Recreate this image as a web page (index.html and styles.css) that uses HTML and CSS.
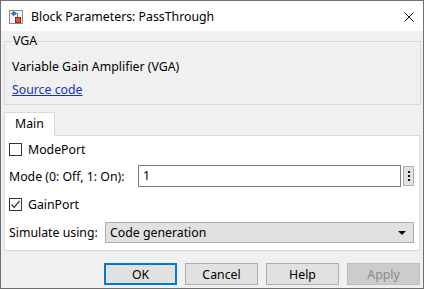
FILE: index.html
```html
<!DOCTYPE html>
<html>
<head>
  <title>Block Parameters: PassThrough</title>
  <meta name="viewport" content="width=device-width, initial-scale=1.0">
  <link rel="stylesheet" href="styles.css">
</head>
<body>
  <div class="window">
    <!-- Title bar -->
    <div class="titlebar">
      <span class="app-icon">
        <svg width="14" height="14" viewBox="0 0 14 14">
          <rect x="0.5" y="0.5" width="13" height="13" fill="#f4f4f4" stroke="#8c8c8c"/>
          <path d="M2 3.5 H4 M4 1.5 V5.5 L7.5 3.5 Z" fill="#2f8fd8" stroke="#1d5fa8" stroke-width="1"/>
          <path d="M6.5 3.5 H8.5 V7" fill="none" stroke="#2f8fd8" stroke-width="1"/>
          <rect x="6.5" y="7.5" width="5" height="5" fill="#e8552a" stroke="#8a2a10"/>
        </svg>
      </span>
      <span class="title">Block Parameters: PassThrough</span>
      <span class="close">
        <svg width="10" height="10" viewBox="0 0 10 10">
          <path d="M0.5 0.5 L9.5 9.5 M9.5 0.5 L0.5 9.5" stroke="#111" stroke-width="1"/>
        </svg>
      </span>
    </div>

    <div class="content">
      <fieldset class="group">
        <legend>VGA</legend>
        <div class="desc">Variable Gain Amplifier (VGA)</div>
        <a class="link" href="#">Source code</a>
      </fieldset>

      <div class="tabs">
        <div class="tab active">Main</div>
      </div>
      <div class="panel">
        <label class="row check-row first">
          <span class="checkbox"></span>
          <span>ModePort</span>
        </label>
        <div class="row field-row">
          <span class="label">Mode (0: Off, 1: On):</span>
          <div class="text-input">1</div>
          <div class="dots-btn"><i></i><i></i><i></i></div>
        </div>
        <label class="row check-row">
          <span class="checkbox checked">
            <svg width="11" height="11" viewBox="0 0 11 11">
              <path d="M1.5 5.5 L4.2 8.3 L9.5 1.8" fill="none" stroke="#222" stroke-width="1.1"/>
            </svg>
          </span>
          <span>GainPort</span>
        </label>
        <div class="row select-row">
          <span class="label">Simulate using:</span>
          <div class="select">
            <span>Code generation</span>
            <span class="arrow"></span>
          </div>
        </div>
      </div>

      <div class="buttons">
        <button class="btn default">OK</button>
        <button class="btn">Cancel</button>
        <button class="btn">Help</button>
        <button class="btn disabled">Apply</button>
      </div>
    </div>
  </div>
</body>
</html>
```

FILE: styles.css
```css
body {
  margin: 0;
  font-family: "Noto Sans", "Segoe UI", sans-serif;
  font-size: 12.3px;
  color: #000;
  background-color: #fff;
}

.window {
  box-sizing: border-box;
  width: 424px;
  height: 289px;
  border: 1px solid #6f6f6f;
  display: flex;
  flex-direction: column;
  background-color: #f0f0f0;
}

.titlebar {
  height: 30px;
  background-color: #fff;
  display: flex;
  align-items: center;
  padding-left: 8px;
  padding-right: 9px;
}

.app-icon {
  display: flex;
  width: 14px;
  height: 14px;
  margin-top: 1px;
}

.title {
  flex: 1;
  margin-left: 8px;
}

.close {
  display: flex;
  margin-top: 1px;
}

.content {
  flex: 1;
  display: flex;
  flex-direction: column;
  padding: 0 2px 0 3px;
}

.group {
  margin: 2px 0 0 0;
  padding: 3px 7px 6px 7px;
  border: 1px solid #dadada;
  min-width: 0;
}

.group legend {
  padding: 0 1px;
  line-height: 16px;
}

.desc {
  line-height: 16px;
  margin-top: 7px;
}

.link {
  display: inline-block;
  margin-top: 7px;
  color: #1433b8;
  text-decoration: underline;
  line-height: 16px;
}

.tabs {
  display: flex;
  margin-top: 6px;
}

.tab {
  box-sizing: border-box;
  width: 51px;
  height: 24px;
  padding-left: 10px;
  line-height: 22px;
  background-color: #fff;
  border: 1px solid #d9d9d9;
  border-bottom: none;
  position: relative;
  top: 1px;
}

.panel {
  box-sizing: border-box;
  height: 116px;
  margin-right: 1px;
  background-color: #fff;
  border: 1px solid #d9d9d9;
  padding: 0 5px 0 3px;
  display: flex;
  flex-direction: column;
}

.row {
  display: flex;
  align-items: center;
}

.check-row {
  height: 14px;
  margin-top: 10px;
}

.check-row.first {
  margin-top: 6px;
}

.checkbox {
  box-sizing: border-box;
  width: 13px;
  height: 13px;
  border: 1px solid #333;
  background-color: #fff;
  margin-left: 1px;
  margin-right: 6px;
  display: flex;
  align-items: center;
  justify-content: center;
}

.field-row {
  height: 22px;
  margin-top: 9px;
}

.field-row .label {
  width: 129px;
  margin-left: 1px;
}

.text-input {
  box-sizing: border-box;
  flex: 1;
  height: 22px;
  border: 1px solid #7a7a7a;
  padding-left: 4px;
  line-height: 20px;
  background-color: #fff;
}

.dots-btn {
  box-sizing: border-box;
  width: 11px;
  height: 20px;
  margin-left: 2px;
  background-color: #e1e1e1;
  border: 1px solid #adadad;
  display: flex;
  flex-direction: column;
  align-items: center;
  justify-content: center;
  gap: 2px;
}

.dots-btn i {
  display: block;
  width: 2px;
  height: 2px;
  background-color: #111;
}

.select-row {
  height: 21px;
  margin-top: 11px;
}

.select-row .label {
  width: 96px;
  margin-left: 1px;
}

.select {
  box-sizing: border-box;
  flex: 1;
  height: 21px;
  background-color: #e1e1e1;
  border: 1px solid #adadad;
  padding: 0 7px 0 4px;
  display: flex;
  align-items: center;
  justify-content: space-between;
}

.arrow {
  width: 0;
  height: 0;
  border-left: 4px solid transparent;
  border-right: 4px solid transparent;
  border-top: 4px solid #111;
}

.buttons {
  display: flex;
  justify-content: flex-end;
  gap: 8px;
  margin-top: 12px;
  margin-right: 1px;
}

.btn {
  box-sizing: border-box;
  width: 73px;
  height: 22px;
  font-family: "Noto Sans", "Segoe UI", sans-serif;
  font-size: 12.3px;
  color: #000;
  background-color: #e1e1e1;
  border: 1px solid #adadad;
  padding: 0;
}

.btn.default {
  border: 2px solid #0078d7;
}

.btn.disabled {
  background-color: #cccccc;
  border-color: #bfbfbf;
  color: #8a8a8a;
}
```
